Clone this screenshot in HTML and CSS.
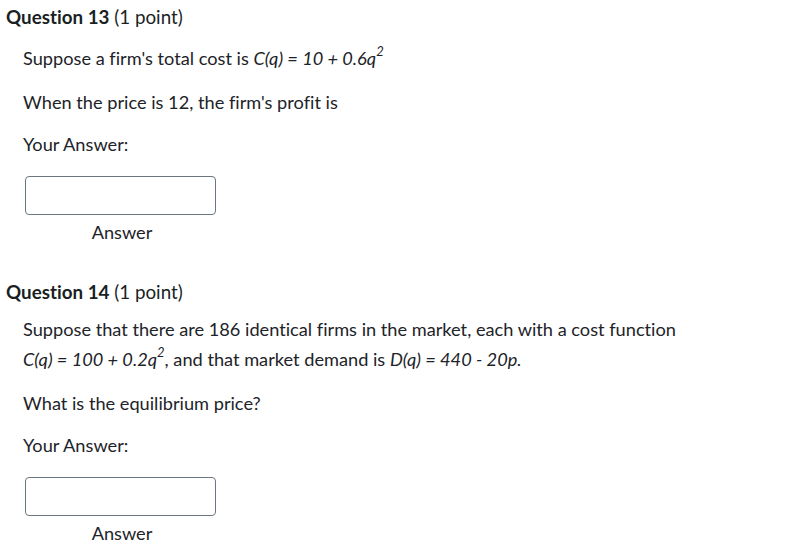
FILE: index.html
```html
<!DOCTYPE html>
<html>
<head>
<meta charset="utf-8">
<link rel="stylesheet" href="styles.css">
</head>
<body>
<div class="question q13">
  <h2 class="qhead"><b>Question 13</b> (1 point)</h2>
  <div class="qbody">
    <p class="line first">Suppose a firm's total cost is <i>C(q) = 10 + 0.6q<sup>2</sup></i></p>
    <p class="line">When the price is 12, the firm's profit is</p>
    <p class="line tight">Your Answer:</p>
    <div class="answer">
      <div class="box"></div>
      <div class="label">Answer</div>
    </div>
  </div>
</div>
<div class="question q14">
  <h2 class="qhead"><b>Question 14</b> (1 point)</h2>
  <div class="qbody">
    <p class="line multi">Suppose that there are 186 identical firms in the market, each with a cost function <i>C(q) = 100 + 0.2q<sup>2</sup></i>, and that market demand is <i>D(q) = 440 - 20p.</i></p>
    <p class="line after">What is the equilibrium price?</p>
    <p class="line tight">Your Answer:</p>
    <div class="answer">
      <div class="box"></div>
      <div class="label">Answer</div>
    </div>
  </div>
</div>
</body>
</html>
```
FILE: styles.css
```css
html, body {
  margin: 0;
  padding: 0;
  background: #fff;
}
body {
  font-family: Lato, "Noto Sans", sans-serif;
  font-variant-ligatures: none;
  color: #2d3b45;
  width: 785px;
  height: 552px;
  overflow: hidden;
}
.question {
  padding-left: 6px;
}
.q13 {
  padding-top: 6px;
}
.q14 {
  padding-top: 38px;
}
.qhead {
  margin: 0;
  font-size: 18.8px;
  font-weight: 400;
  line-height: 22px;
  color: #1a1f24;
}
.qhead b {
  font-weight: 700;
}
.qbody {
  padding-left: 17px;
  width: 662px;
}
.line {
  margin: 0;
  margin-top: 20px;
  font-size: 18.2px;
  line-height: 24px;
  color: #1d2328;
}
.line.first {
  margin-top: 18px;
}
.multi {
  line-height: 30px;
  margin-top: 11px;
}
.line.after {
  margin-top: 17px;
}
.line.tight {
  margin-top: 18px;
}
.line i {
  font-style: italic;
}
sup {
  font-size: 13px;
  line-height: 0;
  vertical-align: 9px;
}
.answer {
  width: 194px;
  margin-top: 20px;
  padding-left: 2px;
}
.box {
  width: 189px;
  height: 37px;
  border: 1px solid #6b7780;
  border-radius: 4px;
}
.label {
  text-align: center;
  font-size: 18.2px;
  line-height: 22px;
  margin-top: 6px;
  color: #1d2328;
}
```
